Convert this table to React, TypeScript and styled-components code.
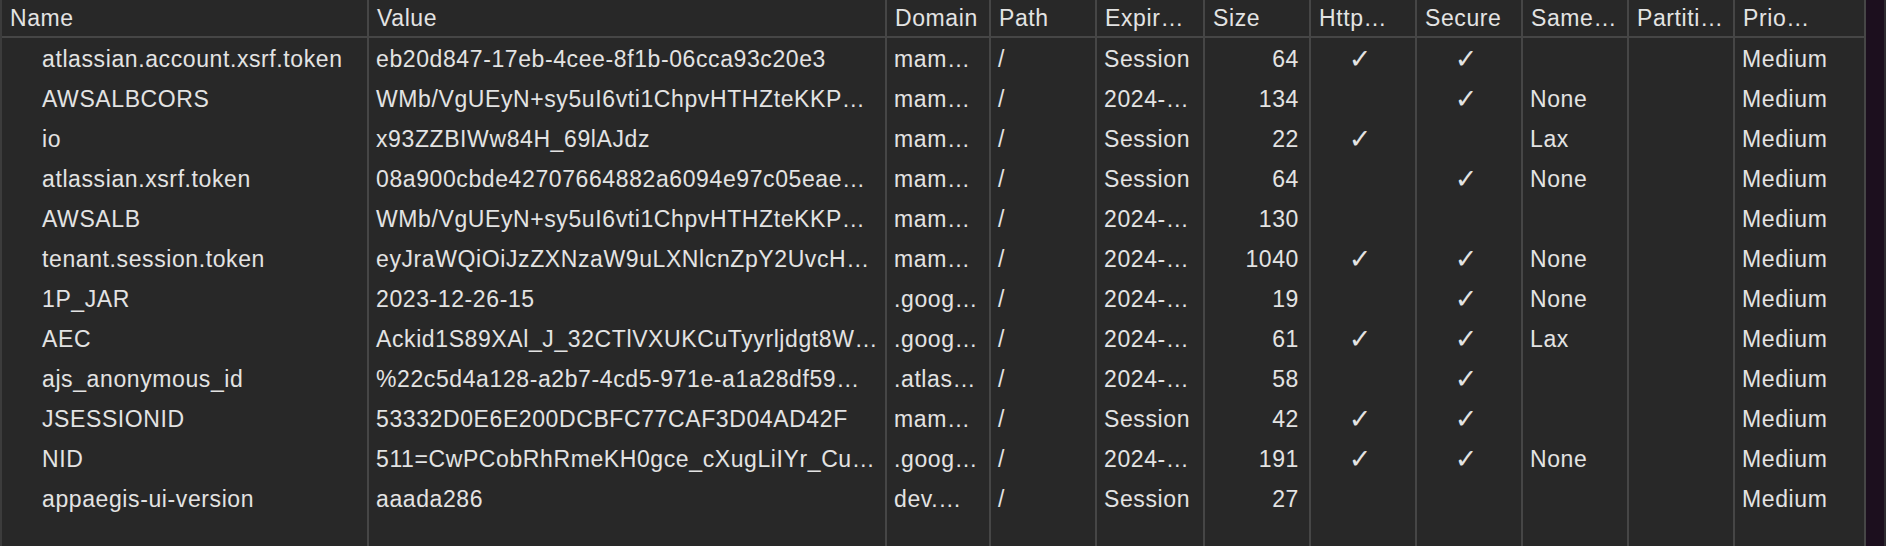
import React from "react";
import styled, { createGlobalStyle } from "styled-components";

const Global = createGlobalStyle`
  html, body { margin: 0; padding: 0; background: #282828; }
  body { font-family: "Liberation Sans", Arial, Helvetica, sans-serif; }
`;

const COLS = [367, 518, 104, 106, 108, 106, 106, 106, 106, 106, 131];

type Align = "left" | "right" | "center";

const columns: { title: string; align: Align }[] = [
  { title: "Name", align: "left" },
  { title: "Value", align: "left" },
  { title: "Domain", align: "left" },
  { title: "Path", align: "left" },
  { title: "Expir…", align: "left" },
  { title: "Size", align: "right" },
  { title: "Http…", align: "center" },
  { title: "Secure", align: "center" },
  { title: "Same…", align: "left" },
  { title: "Partiti…", align: "left" },
  { title: "Prio…", align: "left" },
];

const C = "✓";

const rows: string[][] = [
  ["atlassian.account.xsrf.token", "eb20d847-17eb-4cee-8f1b-06cca93c20e3", "mam…", "/", "Session", "64", C, C, "", "", "Medium"],
  ["AWSALBCORS", "WMb/VgUEyN+sy5uI6vti1ChpvHTHZteKKP…", "mam…", "/", "2024-…", "134", "", C, "None", "", "Medium"],
  ["io", "x93ZZBIWw84H_69lAJdz", "mam…", "/", "Session", "22", C, "", "Lax", "", "Medium"],
  ["atlassian.xsrf.token", "08a900cbde42707664882a6094e97c05eae…", "mam…", "/", "Session", "64", "", C, "None", "", "Medium"],
  ["AWSALB", "WMb/VgUEyN+sy5uI6vti1ChpvHTHZteKKP…", "mam…", "/", "2024-…", "130", "", "", "", "", "Medium"],
  ["tenant.session.token", "eyJraWQiOiJzZXNzaW9uLXNlcnZpY2UvcH…", "mam…", "/", "2024-…", "1040", C, C, "None", "", "Medium"],
  ["1P_JAR", "2023-12-26-15", ".goog…", "/", "2024-…", "19", "", C, "None", "", "Medium"],
  ["AEC", "Ackid1S89XAl_J_32CTlVXUKCuTyyrljdgt8W…", ".goog…", "/", "2024-…", "61", C, C, "Lax", "", "Medium"],
  ["ajs_anonymous_id", "%22c5d4a128-a2b7-4cd5-971e-a1a28df59…", ".atlas…", "/", "2024-…", "58", "", C, "", "", "Medium"],
  ["JSESSIONID", "53332D0E6E200DCBFC77CAF3D04AD42F", "mam…", "/", "Session", "42", C, C, "", "", "Medium"],
  ["NID", "511=CwPCobRhRmeKH0gce_cXugLiIYr_Cu…", ".goog…", "/", "2024-…", "191", C, C, "None", "", "Medium"],
  ["appaegis-ui-version", "aaada286", "dev.…", "/", "Session", "27", "", "", "", "", "Medium"],
];

const Page = styled.div`
  display: flex;
  width: 1886px;
  height: 546px;
  overflow: hidden;
`;

const Grid = styled.div`
  display: grid;
  grid-template-columns: ${COLS.map((w) => `${w}px`).join(" ")};
  grid-template-rows: 38px repeat(${rows.length}, 40px) 1fr;
  height: 546px;
  background: #282828;
  border-left: 2px solid #3c3c3c;
  color: #e3e3e3;
  font-size: 23px;
  letter-spacing: 0.6px;
`;

const Cell = styled.div<{ $align: Align; $indent?: boolean }>`
  box-sizing: border-box;
  border-right: 2px solid #464646;
  display: flex;
  align-items: center;
  justify-content: ${(p) =>
    p.$align === "right" ? "flex-end" : p.$align === "center" ? "center" : "flex-start"};
  padding: 1px ${(p) => (p.$align === "right" ? "10px" : "6px")} 0
    ${(p) => (p.$indent ? "40px" : p.$align === "left" ? "7px" : "0")};
  white-space: nowrap;
  overflow: hidden;
  line-height: 40px;
`;

const HeadCell = styled(Cell)`
  border-bottom: 2px solid #464646;
  line-height: 36px;
  padding-top: 0;
  padding-left: ${(p) => (p.$align === "left" ? "8px" : "0")};
`;

const Check = styled.span`
  font-family: "DejaVu Sans", sans-serif;
  font-size: 27px;
  letter-spacing: 0;
`;

const Filler = styled.div`
  border-right: 2px solid #464646;
`;

const Strip = styled.div`
  flex: 1;
  background: #1c0f1e;
  border-right: 2px solid #2e2a30;
`;

export default function App() {
  return (
    <>
      <Global />
      <Page>
        <Grid>
          {columns.map((c, i) => (
            <HeadCell key={`h${i}`} $align="left">
              {c.title}
            </HeadCell>
          ))}
          {rows.map((r, ri) =>
            r.map((v, ci) => (
              <Cell key={`${ri}-${ci}`} $align={columns[ci].align} $indent={ci === 0}>
                {v === C ? <Check>{v}</Check> : v}
              </Cell>
            ))
          )}
          {columns.map((_, i) => (
            <Filler key={`f${i}`} />
          ))}
        </Grid>
        <Strip />
      </Page>
    </>
  );
}
